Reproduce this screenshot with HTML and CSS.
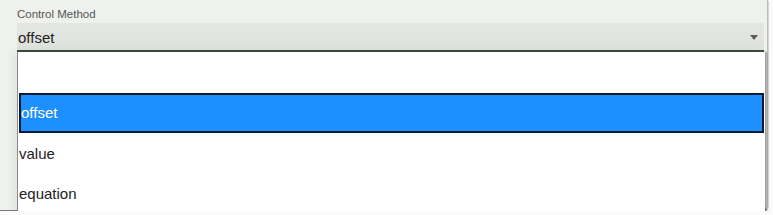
FILE: index.html
```html
<!DOCTYPE html>
<html>
<head>
<meta charset="utf-8">
<link rel="stylesheet" href="styles.css">
</head>
<body>
<div class="card">
  <div class="label">Control Method</div>
  <div class="field">
    <span class="value">offset</span>
    <span class="arrow"></span>
  </div>
  <div class="dropdown">
    <div class="opt opt-empty"></div>
    <div class="opt opt-sel">offset</div>
    <div class="opt opt-tall">value</div>
    <div class="opt">equation</div>
  </div>
</div>
</body>
</html>
```
FILE: styles.css
```css
html, body {
  margin: 0;
  padding: 0;
  background: #fafafa;
  font-family: "Liberation Sans", Arial, sans-serif;
  overflow: hidden;
}
.card {
  position: relative;
  box-sizing: border-box;
  width: 768px;
  height: 211px;
  background: #eff1ee;
  border-right: 1px solid #bdbdbb;
  border-bottom: 1px solid #7a7a7a;
  border-bottom-right-radius: 6px;
  box-shadow: 1px 1px 1px rgba(0,0,0,0.15);
  padding: 8px 0 0 17px;
}
.label {
  font-size: 11.5px;
  line-height: 13px;
  color: #555;
  margin-bottom: 2px;
}
.field {
  box-sizing: border-box;
  width: 747px;
  height: 29px;
  background: linear-gradient(#e4e6e2, #dfe1dd);
  border-bottom: 2px solid #3f5040;
  padding: 3px 0 0 1px;
  display: flex;
  justify-content: space-between;
  align-items: flex-start;
}
.value {
  font-size: 15px;
  line-height: 24px;
  color: #222;
}
.arrow {
  width: 0;
  height: 0;
  border-left: 4.5px solid transparent;
  border-right: 4.5px solid transparent;
  border-top: 5px solid #5a5a5a;
  margin: 9px 6px 0 0;
}
.dropdown {
  position: absolute;
  top: 52px;
  left: 17px;
  box-sizing: border-box;
  width: 748px;
  height: 170px;
  background: #fff;
  border-left: 1px solid #8c8c8c;
  box-shadow: 2px 0 2px rgba(0,0,0,0.35), -4px 0 8px rgba(0,0,0,0.06);
}
.opt {
  height: 40px;
  line-height: 40px;
  font-size: 15px;
  color: #222;
  padding-left: 1px;
}
.opt-empty {
  height: 41px;
}
.opt-tall {
  height: 41px;
  line-height: 41px;
}
.opt-sel {
  box-sizing: border-box;
  margin: 0 1px 0 1px;
  padding-left: 0;
  background: #1e8ffe;
  border: 2px solid #0c1a30;
  color: #fff;
  line-height: 36px;
}
```
